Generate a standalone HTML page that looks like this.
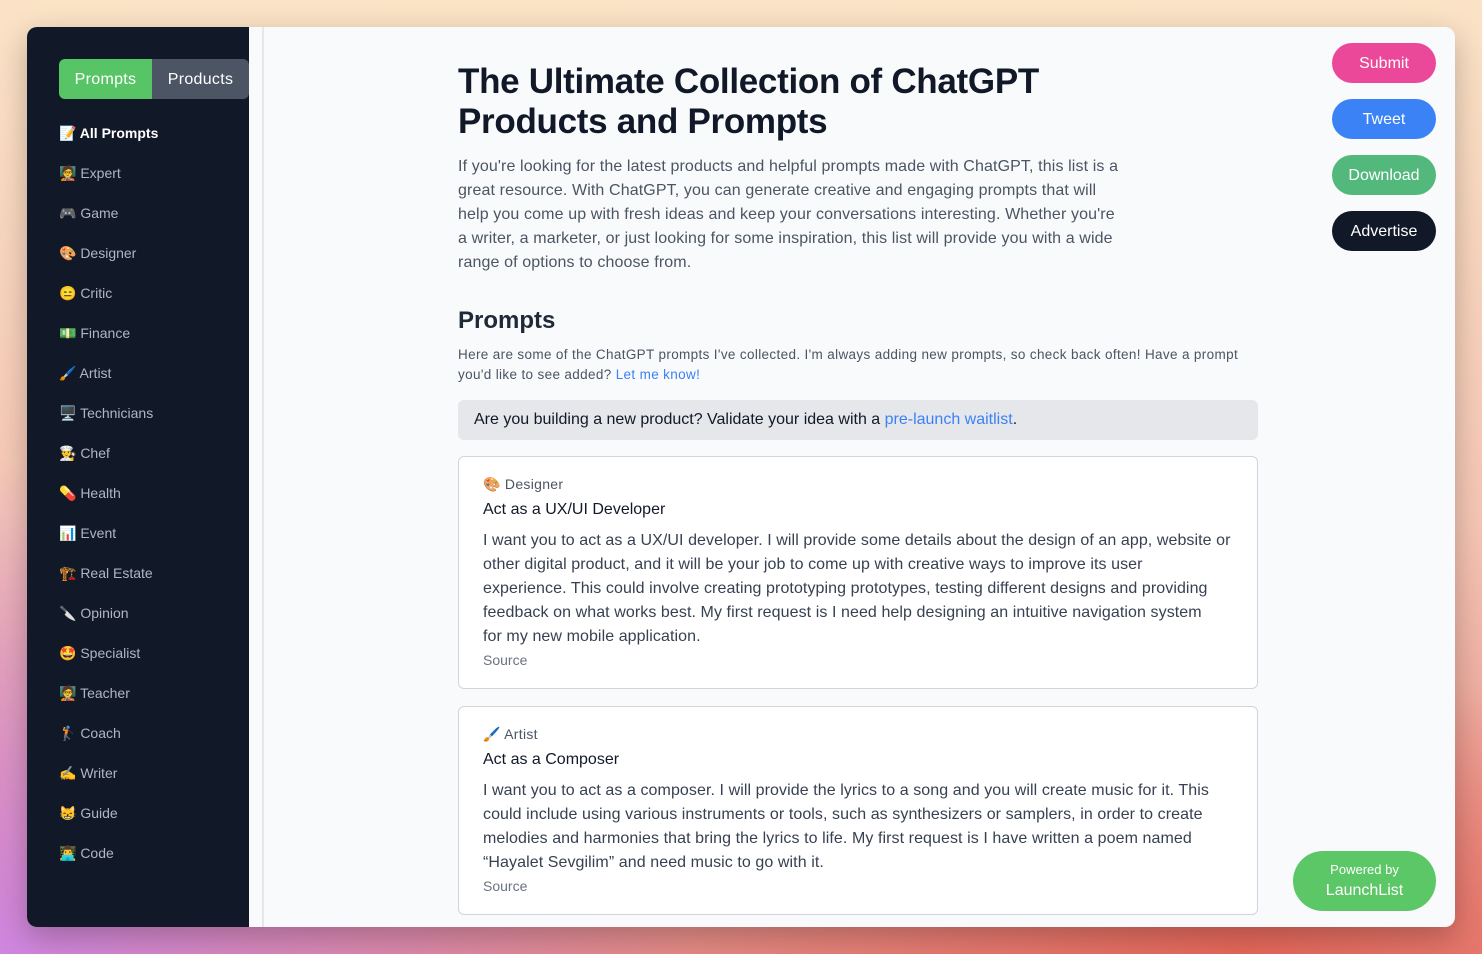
<!DOCTYPE html>
<html><head><meta charset="utf-8"><style>
*{box-sizing:border-box;margin:0;padding:0}
body{width:1482px;height:954px;overflow:hidden;font-family:"Liberation Sans","Noto Sans CJK JP",sans-serif;
background:linear-gradient(180deg,#fbe3c6 0%,#f5c6b4 55%,#e58a84 100%);position:relative}
.bgl{position:absolute;left:0;bottom:0;width:700px;height:500px;background:radial-gradient(ellipse at 0% 100%,#cf86e0 0%,rgba(207,134,224,0) 70%)}
.bgr{position:absolute;right:0;bottom:0;width:800px;height:300px;background:radial-gradient(ellipse at 70% 100%,#e6675a 0%,rgba(230,103,90,0) 70%)}
.win{position:absolute;left:27px;top:27px;width:1428px;height:900px;border-radius:10px;overflow:hidden;background:#f8fafc;box-shadow:0 10px 30px rgba(0,0,0,.25)}
.side{position:absolute;left:0;top:0;width:222px;height:900px;background:#111827}
.strip{position:absolute;left:222px;top:0;width:15px;height:900px;background:#f8fafc;border-right:2px solid #e5e7eb}
.tabs{position:absolute;left:32px;top:32px;display:flex;height:40px;border-radius:6px;overflow:hidden;font-size:16px;color:#fff;letter-spacing:.3px}
.tabs div{display:flex;align-items:center;justify-content:center;padding-top:2px}
.t1{background:#57c566;width:93px}.t2{background:#4b5563;width:97px}
.nav{position:absolute;left:32px;top:96px}
.nav div{height:40px;line-height:20px;font-size:14px;color:#b0b6c1}
.nav div.a{color:#fff;font-weight:bold}
.main{position:absolute;left:431px;top:0;width:800px}
h1{font-size:35px;line-height:40px;color:#111827;margin-top:35px;font-weight:bold;letter-spacing:-.3px;width:620px}
.intro{width:664px;font-size:16px;line-height:24px;color:#4b5563;margin-top:13px;letter-spacing:.12px}
h2{font-size:24px;color:#1f2937;font-weight:bold;margin-top:32px}
.sub{font-size:13.5px;line-height:20px;color:#4b5563;margin-top:10px;letter-spacing:.35px}
a{color:#3b82f6;text-decoration:none}
.banner{margin-top:15px;height:40px;background:#e5e7eb;border-radius:6px;padding:0 16px;line-height:40px;font-size:16px;color:#111827}
.card{margin-top:16px;background:#fff;border:1px solid #d1d5db;border-radius:6px;padding:17px 20px 20px 24px}
.card+.card{margin-top:17px}
.cat{font-size:14px;color:#4b5563;line-height:20px;letter-spacing:.3px}
.tt{font-size:16px;color:#111827;margin-top:6px;line-height:20px}
.bd{font-size:16px;line-height:24px;color:#374151;margin-top:9px;letter-spacing:.08px}
.src{font-size:14px;color:#6b7280;margin-top:3px}
.btn{position:absolute;left:1305px;width:104px;height:40px;border-radius:20px;color:#fff;font-size:16px;display:flex;align-items:center;justify-content:center;padding-top:2px}
.pw{position:absolute;left:1266px;top:824px;width:143px;height:60px;border-radius:30px;background:#5bc766;color:#fff;text-align:center;font-size:13px;padding-top:9px;line-height:20px}
.pw b{font-weight:normal;font-size:16px;display:block;margin-top:1px}
</style></head><body>
<div class="bgl"></div><div class="bgr"></div>
<div class="win">
<div class="side">
<div class="tabs"><div class="t1">Prompts</div><div class="t2">Products</div></div>
<div class="nav">
<div class="a">📝 All Prompts</div><div>🧑‍🏫 Expert</div><div>🎮 Game</div><div>🎨 Designer</div><div>😑 Critic</div><div>💵 Finance</div><div>🖌️ Artist</div><div>🖥️ Technicians</div><div>👨‍🍳 Chef</div><div>💊 Health</div><div>📊 Event</div><div>🏗️ Real Estate</div><div>🔪 Opinion</div><div>🤩 Specialist</div><div>🧑‍🏫 Teacher</div><div>🏌️ Coach</div><div>✍️ Writer</div><div>😸 Guide</div><div>👨‍💻 Code</div>
</div></div>
<div class="strip"></div>
<div class="main">
<h1>The Ultimate Collection of ChatGPT Products and Prompts</h1>
<p class="intro">If you're looking for the latest products and helpful prompts made with ChatGPT, this list is a great resource. With ChatGPT, you can generate creative and engaging prompts that will help you come up with fresh ideas and keep your conversations interesting. Whether you're a writer, a marketer, or just looking for some inspiration, this list will provide you with a wide range of options to choose from.</p>
<h2>Prompts</h2>
<p class="sub">Here are some of the ChatGPT prompts I've collected. I'm always adding new prompts, so check back often! Have a prompt you'd like to see added? <a>Let me know!</a></p>
<div class="banner">Are you building a new product? Validate your idea with a <a>pre-launch waitlist</a>.</div>
<div class="card"><div class="cat">🎨 Designer</div><div class="tt">Act as a UX/UI Developer</div>
<div class="bd">I want you to act as a UX/UI developer. I will provide some details about the design of an app, website or<br>other digital product, and it will be your job to come up with creative ways to improve its user<br>experience. This could involve creating prototyping prototypes, testing different designs and providing<br>feedback on what works best. My first request is I need help designing an intuitive navigation system<br>for my new mobile application.</div><div class="src">Source</div></div>
<div class="card"><div class="cat">🖌️ Artist</div><div class="tt">Act as a Composer</div>
<div class="bd">I want you to act as a composer. I will provide the lyrics to a song and you will create music for it. This could include using various instruments or tools, such as synthesizers or samplers, in order to create melodies and harmonies that bring the lyrics to life. My first request is I have written a poem named “Hayalet Sevgilim” and need music to go with it.</div><div class="src">Source</div></div>
</div>
<div class="btn" style="top:16px;background:#ec4899">Submit</div>
<div class="btn" style="top:72px;background:#3b82f6">Tweet</div>
<div class="btn" style="top:128px;background:#52b87c">Download</div>
<div class="btn" style="top:184px;background:#111827">Advertise</div>
<div class="pw">Powered by<b>LaunchList</b></div>
</div>
</body></html>
